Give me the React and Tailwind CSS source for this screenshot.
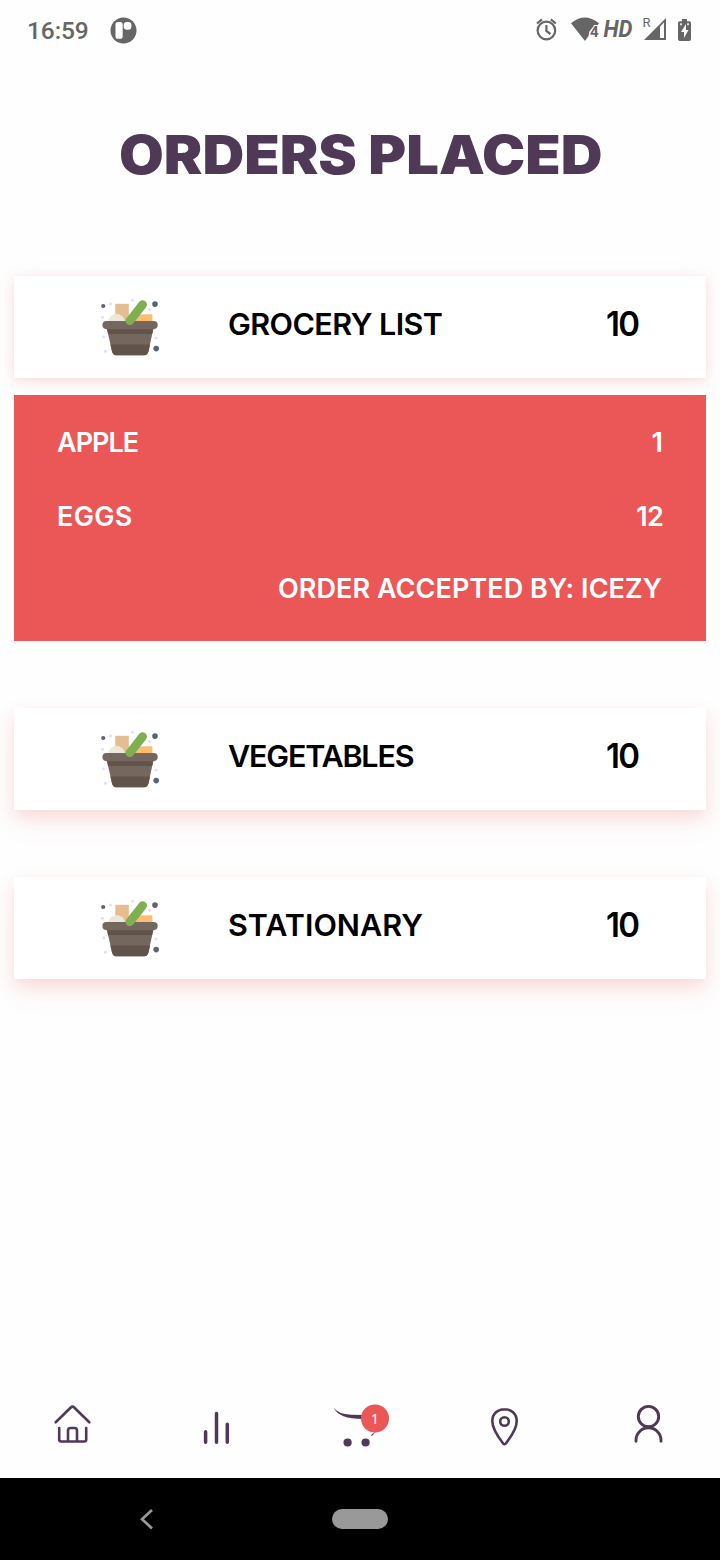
function Basket() {
  return (
    <svg width="60" height="60" viewBox="0 0 60 60" className="shrink-0">
      <g fill="#dfe1f2">
        <circle cx="10.5" cy="6" r="1.5" /><circle cx="32.5" cy="2.3" r="1.5" />
        <circle cx="49.6" cy="11.3" r="1.5" /><circle cx="2.5" cy="19.3" r="1.5" />
        <circle cx="3.8" cy="38.7" r="1.5" /><circle cx="56" cy="40" r="1.5" />
        <circle cx="5.2" cy="53.2" r="1.5" />
      </g>
      <g fill="#5a6476">
        <circle cx="3.2" cy="8" r="2.1" /><circle cx="55" cy="6.1" r="2.8" />
        <circle cx="56.2" cy="50.6" r="2.8" />
      </g>
      <path d="M15.3 5.8h13.5V24H15.3z" fill="#e5bd90" />
      <path d="M7.8 24a9 10 0 0 1 17.6 0z" fill="#ebe7db" />
      <path d="M32 16.3h20.4V24H32z" fill="#fdbd74" />
      <path d="M6.3 28h47.6l-5.4 25.3q-1 3.9-4 3.9H16q-3 0-4-3.9z" fill="#74675d" />
      <path d="M7 31h46.2l-1 5H8zM10.400 46.500h39.600l-1.500 6.800q-1 3.900-4 3.900H16q-3 0-4-3.900z" fill="#61534a" />
      <rect x="2.4" y="23" width="55.300" height="8.200" rx="4.100" fill="#74675d" />
      <path d="M29.800 22.800L42.700 6.500" stroke="#7faf51" strokeWidth="8.600" strokeLinecap="round" />
    </svg>
  );
}

function OrderCard({ name, count, nameClass, className }) {
  return (
    <div className={`flex h-[102px] items-center bg-white text-black ${className}`}>
      <div className="flex w-[214px] pl-[86px] pt-[2px]"><Basket /></div>
      <div className={`flex-1 whitespace-nowrap pb-[7px] text-[30.500px] leading-10 font-semibold ${nameClass}`}>{name}</div>
      <div className="w-[101px] origin-left scale-x-[0.97] whitespace-nowrap pb-[7px] pl-[1px] text-[34px] leading-10 font-semibold tracking-[-1.700px]">{count}</div>
    </div>
  );
}

function StatusBar() {
  return (
    <header className="flex h-[60px] items-center justify-between pl-[27px] pr-[28px] text-[#666]">
      <div className="flex items-center gap-[21px]">
        <span className="w-[62px] pt-[2px] font-['Roboto'] text-[24.500px] leading-7 font-medium tracking-[-0.100px]">16:59</span>
        <svg width="27" height="27" viewBox="0 0 27 27">
          <circle cx="13.500" cy="13.500" r="13" fill="#666" />
          <rect x="5.500" y="5" width="7.200" height="16.800" rx="2.600" fill="#fff" />
          <rect x="13.700" y="5" width="7.700" height="7.700" rx="3.200" fill="#fff" />
        </svg>
      </div>
      <svg width="160" height="32" viewBox="532 14 160 32" fill="#666">
        <g fill="none" stroke="#666" strokeWidth="2.200">
          <circle cx="546.400" cy="30.500" r="8.800" />
          <path d="M546.400 25v6l4 3M537 23.500l5-4.200M555.800 23.500l-5-4.200" />
        </g>
        <path d="M571 23.300Q584.500 11.500 599 23.300l-1.600 2.200q-4 0-8 6l-.8 4.500L585 41z" />
        <text x="590" y="37" fontFamily="Roboto" fontWeight="700" fontSize="15" stroke="#fefefe" strokeWidth="2" paintOrder="stroke">4</text>
        <text x="603.500" y="37.300" fontFamily="Roboto" fontWeight="700" fontStyle="italic" fontSize="24" textLength="29" lengthAdjust="spacingAndGlyphs">HD</text>
        <text x="642.500" y="27" fontFamily="Roboto" fontSize="13" textLength="7">R</text>
        <path d="M644 40l22-22v22z" />
        <path d="M660 26.500l4-4V38h-4z" fill="#fff" />
        <path d="M682 19h5v2.300h2.200q1.800 0 1.800 1.800v16q0 1.900-1.800 1.900h-9.400q-1.800 0-1.800-1.900v-16q0-1.800 1.800-1.800h2.200z" />
        <path d="M686 24l-5 8h3v6l4.500-8H686z" fill="#fff" />
        <path d="M680 23.300h2v2h-2zM687 23.300h2v2h-2z" fill="#ddd" />
      </svg>
    </header>
  );
}

const line = { fill: "none", stroke: "#4f3957", strokeWidth: 2.6, strokeLinecap: "round", strokeLinejoin: "round" };

function TabBar() {
  return (
    <nav className="grid h-[108px] grid-cols-5 justify-items-center pt-[30px]">
      <svg width="60" height="50" viewBox="42 1400 60 50" {...line}>
        <path d="M55.700 1422.300L70.800 1407.500q1.700-1.600 3.400 0L89.300 1422.300M59.200 1428v11.500q0 2 2 2h23q2 0 2-2V1428M68 1441.500v-11q0-2.500 2.500-2.500h4q2.500 0 2.500 2.500v11" />
      </svg>
      <svg width="60" height="50" viewBox="186 1400 60 50" {...line} strokeWidth="3.500">
        <path d="M205.600 1431.700v10.500M216.500 1413.600v28.600M227.300 1424.300v17.900" />
      </svg>
      <svg width="60" height="50" viewBox="330 1400 60 50" fill="#4f3957">
        <path d="M333.500 1407.500Q338 1414.200 351 1414.700L365 1415v4Q339 1419.500 333.500 1407.500z" />
        <circle cx="347.600" cy="1442.500" r="4.100" />
        <circle cx="365.600" cy="1442.500" r="4.100" />
        <path d="M371 1435l5.500-4-4.500 5z" />
        <circle cx="375" cy="1418.500" r="14" fill="#eb5757" />
        <text x="375" y="1424" textAnchor="middle" fontFamily="Noto Sans" fontSize="14.500" fill="#fff">1</text>
      </svg>
      <svg width="60" height="50" viewBox="474 1400 60 50" {...line}>
        <path d="M504.500 1409.200c-7 0-12.200 5-12.200 11.800 0 7.500 5.500 15.500 10.300 21.700q1.900 3 3.800 0c4.800-6.200 10.300-14.200 10.300-21.700 0-6.800-5.200-11.800-12.200-11.800z" />
        <circle cx="504.500" cy="1421.500" r="4.300" />
      </svg>
      <svg width="60" height="50" viewBox="618 1400 60 50" {...line} strokeWidth="2.900">
        <circle cx="648.500" cy="1416.600" r="10.200" />
        <path d="M636 1441.300v-1a12.500 12.500 0 0 1 25 0v1" />
      </svg>
    </nav>
  );
}

export default function App() {
  return (
    <div className="flex h-[1560px] w-[720px] flex-col overflow-hidden bg-[#fefefe] font-['Inter',sans-serif]">
      <StatusBar />
      <h1 className="ml-[119px] mt-[65px] h-[60px] origin-left scale-x-[1.091] whitespace-nowrap text-[53px] leading-[60px] font-black text-[#4f3957]">ORDERS PLACED</h1>
      <main className="mt-[91px] flex flex-1 flex-col px-[14px]">
        <OrderCard name="GROCERY LIST" count="10" nameClass="tracking-[-0.580px]" className="shadow-[0_2px_10px_rgba(235,87,87,0.18),0_5px_24px_rgba(235,87,87,0.06)]" />
        <section className="relative mt-[17px] h-[246px] bg-[#eb5757] pl-[43px] pr-[43px] pt-[28px] text-[27px] leading-10 font-semibold text-white">
          <div className="flex justify-between"><span className="tracking-[-1px]">APPLE</span><span>1</span></div>
          <div className="mt-[34px] flex justify-between"><span className="tracking-[0.300px]">EGGS</span><span className="tracking-[-0.800px]">12</span></div>
          <div className="mt-[32px] whitespace-nowrap pr-[1px] text-right tracking-[0.060px]">ORDER ACCEPTED BY: ICEZY</div>
        </section>
        <OrderCard name="VEGETABLES" count="10" nameClass="tracking-[-1.200px]" className="mt-[67px] shadow-[0_7px_16px_rgba(235,87,87,0.18),0_14px_28px_rgba(235,87,87,0.06)]" />
        <OrderCard name="STATIONARY" count="10" nameClass="" className="mt-[67px] shadow-[0_7px_16px_rgba(235,87,87,0.18),0_14px_28px_rgba(235,87,87,0.06)]" />
      </main>
      <TabBar />
      <footer className="flex h-[82px] items-center bg-black pl-[136px]">
        <svg width="20" height="24" viewBox="0 0 20 24" fill="none" stroke="#999" strokeWidth="2.700"><path d="M16 3L6 12.200l10 9.200" /></svg>
        <div className="ml-[176px] h-[20px] w-[56px] rounded-full bg-[#999]" />
      </footer>
    </div>
  );
}
